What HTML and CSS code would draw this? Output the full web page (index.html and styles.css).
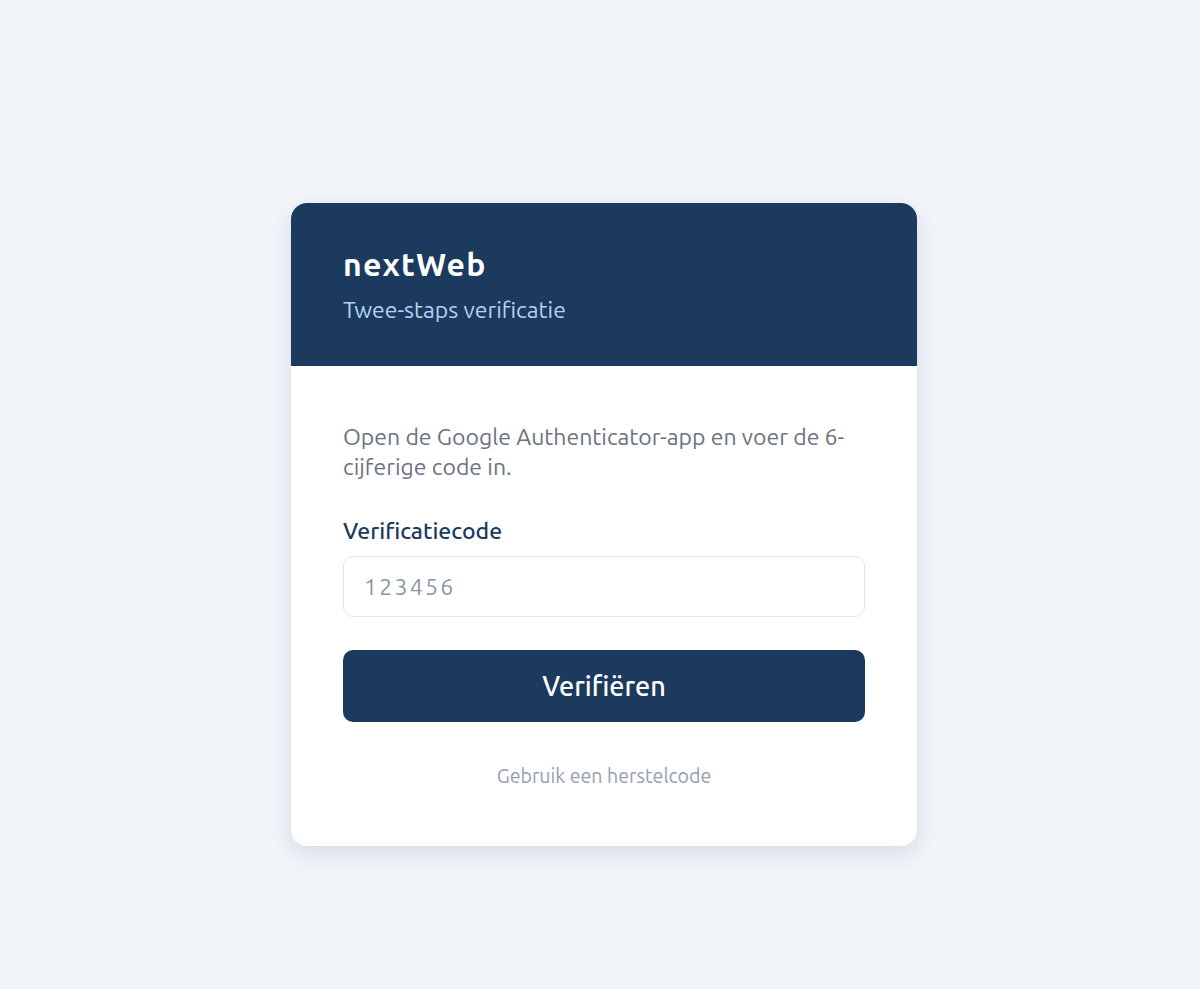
FILE: index.html
```html
<!DOCTYPE html>
<html lang="nl">
<head>
<meta charset="utf-8">
<title>nextWeb - Twee-staps verificatie</title>
<link rel="stylesheet" href="styles.css">
</head>
<body>
<main class="page">
  <section class="card">
    <header class="card-head">
      <h1 class="brand">nextWeb</h1>
      <p class="subtitle">Twee-staps verificatie</p>
    </header>
    <form class="card-body">
      <p class="intro">Open de Google Authenticator-app en voer de 6-cijferige code in.</p>
      <label class="label" for="code">Verificatiecode</label>
      <input class="input" id="code" type="text" placeholder="123456">
      <button class="btn" type="button">Verifiëren</button>
      <a class="link" href="#">Gebruik een herstelcode</a>
    </form>
  </section>
</main>
</body>
</html>
```

FILE: styles.css
```css
* { box-sizing: border-box; }
html, body { margin: 0; padding: 0; }
body {
  background: #f1f4f9;
  font-family: "Ubuntu", "Noto Sans", "Open Sans", sans-serif;
  min-height: 989px;
}
.page {
  display: flex;
  justify-content: center;
  padding: 203px 0 0 8px;
}
.card {
  width: 626px;
  background: #ffffff;
  border-radius: 16px;
  overflow: hidden;
  box-shadow: 0 8px 22px rgba(30, 50, 80, 0.12);
}
.card-head {
  background: #1b3a5e;
  padding: 41px 52px 0;
  height: 163px;
}
.brand {
  margin: 0;
  color: #ffffff;
  font-size: 32px;
  font-weight: 700;
  line-height: 40px;
  letter-spacing: 1.2px;
}
.subtitle {
  margin: 11px 0 0;
  color: #b3d3f1;
  font-size: 23px;
  line-height: 30px;
}
.card-body {
  padding: 56px 52px 56px;
  display: flex;
  flex-direction: column;
}
.intro {
  margin: 0;
  color: #6b7280;
  font-size: 23px;
  line-height: 30px;
}
.label {
  margin-top: 34px;
  color: #1b3a5e;
  font-size: 23px;
  font-weight: 500;
  line-height: 30px;
}
.input {
  margin-top: 10px;
  height: 61px;
  width: 100%;
  border: 1px solid #e2e6ec;
  border-radius: 10px;
  padding: 0 20px;
  font-family: inherit;
  font-size: 23px;
  letter-spacing: 2.3px;
  color: #1b3a5e;
  background: #ffffff;
  outline: none;
}
.input::placeholder { color: #8b95a3; }
.btn {
  margin-top: 33px;
  height: 72px;
  width: 100%;
  border: none;
  border-radius: 10px;
  background: #1b3a5e;
  color: #ffffff;
  font-family: inherit;
  font-size: 27px;
  font-weight: 500;
}
.link {
  margin-top: 40px;
  align-self: center;
  color: #94a0b0;
  font-size: 19.6px;
  line-height: 28px;
  text-decoration: none;
}
```
